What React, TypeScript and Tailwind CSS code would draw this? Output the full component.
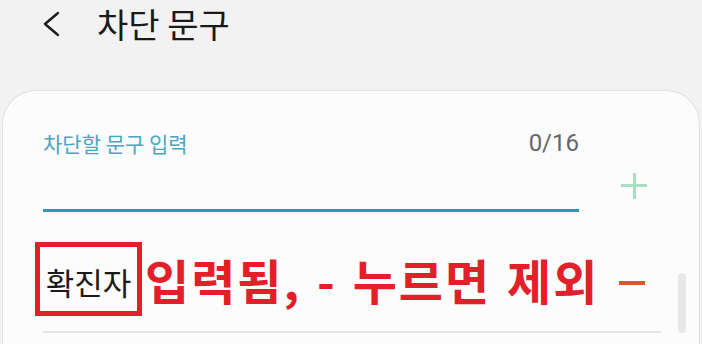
import React from "react";

const KR = { fontFamily: '"Noto Sans CJK KR", "Noto Sans", sans-serif' };

export default function App() {
  return (
    <div className="w-[702px] h-[344px] overflow-hidden bg-[#f2f2f2] flex flex-col" style={KR}>
      <div className="h-[90px] shrink-0 flex items-start pt-[4px]">
        <div className="flex items-center h-[39px]">
          <svg className="ml-[42px]" width="18" height="26" viewBox="0 0 18 26" fill="none">
            <path d="M16 2 L3 13 L16 24" stroke="#1a1a1a" strokeWidth="2.4" strokeLinecap="round" strokeLinejoin="round" />
          </svg>
          <span className="ml-[37px] text-[34px] leading-[39px] text-[#1a1a1a]">차단 문구</span>
        </div>
      </div>
      <div className="relative flex-1 mx-[2px] rounded-t-[34px] bg-[#fcfcfc] border-t border-x border-[#e0e0e0]">
        <div className="flex pl-[40px] pt-[38px]">
          <div className="w-[536px] border-b-[3px] border-[#2a9bb2] h-[83px]">
            <div className="flex justify-between items-center">
              <span className="text-[21px] leading-[28px] text-[#4aa6c2]">차단할 문구 입력</span>
              <span className="text-[24px] leading-[28px] text-[#666666]" style={{ fontFamily: 'Roboto, sans-serif' }}>0/16</span>
            </div>
          </div>
          <div className="ml-[42px] mt-[44px] w-[26px] h-[26px] relative">
            <div className="absolute left-0 top-[11px] w-[26px] h-[3px] bg-[#a6dfc2]" />
            <div className="absolute left-[11.5px] top-0 w-[3px] h-[26px] bg-[#a6dfc2]" />
          </div>
        </div>
        <div className="flex items-center pl-[32px] mt-[30px]">
          <div className="border-[5px] border-[#e3202a] w-[107px] h-[74px] flex items-center justify-center">
            <span className="text-[31px] leading-[36px] text-[#1a1a1a] pt-[6px]">확진자</span>
          </div>
          <span className="ml-[3px] text-[48px] leading-[56px] font-bold text-[#e3202a] tracking-[2px] [word-spacing:3px] whitespace-nowrap">입력됨, - 누르면 제외</span>
          <div className="ml-auto mr-[54px] mt-[8px] w-[26px] h-[4px] bg-[#e0542a]" />
        </div>
        <div className="ml-[40px] w-[618px] h-[2px] bg-[#e6e6e6] mt-[15px]" />
        <div className="absolute left-[675px] top-[182px] w-[8px] h-[60px] rounded-full bg-[#e8e8e8]" />
      </div>
    </div>
  );
}
